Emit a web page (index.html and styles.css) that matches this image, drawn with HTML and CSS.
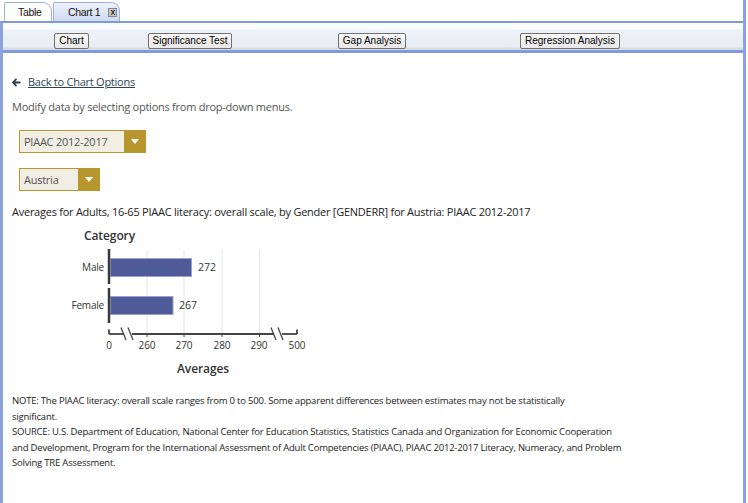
FILE: index.html
```html
<!DOCTYPE html>
<html>
<head>
<meta charset="utf-8">
<link rel="stylesheet" href="styles.css">
</head>
<body>
<div class="window">
  <div class="tabs">
    <div class="tab">Table</div>
    <div class="tab active"><span>Chart 1</span><span class="close">X</span></div>
  </div>
  <div class="panel">
    <div class="toolbar">
      <div class="cell"><button class="btn">Chart</button></div>
      <div class="cell"><button class="btn">Significance Test</button></div>
      <div class="cell"><button class="btn">Gap Analysis</button></div>
      <div class="cell"><button class="btn">Regression Analysis</button></div>
    </div>
    <div class="content">
      <div class="back">
        <svg class="arrow" width="9" height="9" viewBox="0 0 9 9"><path d="M4.5 0.8 L1 4.5 L4.5 8.2 M1.2 4.5 H8.5" fill="none" stroke="#2f3d45" stroke-width="1.8"/></svg>
        <a href="#" class="link">Back to Chart Options</a>
      </div>
      <p class="hint">Modify data by selecting options from drop-down menus.</p>
      <div class="select sel-year"><span class="sel-text">PIAAC 2012-2017</span><span class="sel-btn"><span class="caret"></span></span></div>
      <div class="select sel-country"><span class="sel-text">Austria</span><span class="sel-btn"><span class="caret"></span></span></div>
      <p class="title">Averages for Adults, 16-65 PIAAC literacy: overall scale, by Gender [GENDERR] for Austria: PIAAC 2012-2017</p>
      <svg class="chart" width="300" height="152" viewBox="12 226 300 152">
        <text x="84" y="241" class="ax-title">Category</text>
        <g stroke="#e4e4e4" stroke-width="1">
          <line x1="147" y1="251" x2="147" y2="335"/>
          <line x1="184" y1="251" x2="184" y2="335"/>
          <line x1="222" y1="251" x2="222" y2="335"/>
          <line x1="259.5" y1="251" x2="259.5" y2="335"/>
        </g>
        <rect x="110.5" y="259.5" width="81" height="18" fill="#4f5a98" stroke="#9aa1cc" stroke-width="1"/>
        <rect x="110.5" y="297.5" width="62.5" height="18" fill="#4f5a98" stroke="#9aa1cc" stroke-width="1"/>
        <g stroke="#3a3a3a" stroke-width="2.5">
          <line x1="109" y1="250" x2="109" y2="285"/>
          <line x1="109" y1="289" x2="109" y2="324"/>
        </g>
        <text x="104" y="272" class="lbl" text-anchor="end">Male</text>
        <text x="104" y="310" class="lbl" text-anchor="end">Female</text>
        <text x="198" y="272" class="val">272</text>
        <text x="179" y="310" class="val">267</text>
        <g stroke="#444" stroke-width="1.8" fill="none">
          <line x1="109" y1="335" x2="124" y2="335"/>
          <line x1="132" y1="335" x2="274" y2="335"/>
          <line x1="282" y1="335" x2="297" y2="335"/>
          <line x1="109" y1="330.5" x2="109" y2="335"/>
          <line x1="297" y1="330.5" x2="297" y2="335"/>
        </g>
        <g stroke="#444" stroke-width="1.3" fill="none">
          <line x1="121" y1="328.5" x2="126" y2="341"/>
          <line x1="128" y1="328.5" x2="133" y2="341"/>
          <line x1="271" y1="328.5" x2="276" y2="341"/>
          <line x1="278" y1="328.5" x2="283" y2="341"/>
        </g>
        <g stroke="#444" stroke-width="1">
          <line x1="147" y1="335" x2="147" y2="338"/>
          <line x1="184" y1="335" x2="184" y2="338"/>
          <line x1="222" y1="335" x2="222" y2="338"/>
          <line x1="259.5" y1="335" x2="259.5" y2="338"/>
        </g>
        <g class="tick" text-anchor="middle">
          <text x="109" y="350">0</text>
          <text x="147" y="350">260</text>
          <text x="184" y="350">270</text>
          <text x="222" y="350">280</text>
          <text x="259" y="350">290</text>
          <text x="297" y="350">500</text>
        </g>
        <text x="203" y="374" class="ax-title" text-anchor="middle">Averages</text>
      </svg>
      <div class="notes">
        <p>NOTE: The PIAAC literacy: overall scale ranges from 0 to 500. Some apparent differences between estimates may not be statistically<br>significant.</p>
        <p>SOURCE: U.S. Department of Education, National Center for Education Statistics, Statistics Canada and Organization for Economic Cooperation and Development, Program for the International Assessment of Adult Competencies (PIAAC), PIAAC 2012-2017 Literacy, Numeracy, and Problem Solving TRE Assessment.</p>
      </div>
    </div>
  </div>
</div>
</body>
</html>
```

FILE: styles.css
```css
* { box-sizing: border-box; }
html, body { margin: 0; padding: 0; background: #fff; }
body { width: 748px; height: 503px; overflow: hidden; font-family: "Open Sans", sans-serif; }

.window { width: 746px; height: 503px; display: flex; flex-direction: column; border-right: 3px solid #8aa3dd; }

.tabs { height: 21px; display: flex; align-items: flex-end; padding-left: 4px; gap: 1px; }
.tab {
  height: 19px; width: 48px; padding: 0 0 0 13px; display: flex; align-items: center;
  font-family: "Liberation Sans", sans-serif; font-size: 10.5px; letter-spacing: -0.3px; color: #111;
  white-space: nowrap;
  border: 1px solid #9db0d8; border-bottom: none; border-radius: 2px 9px 0 0;
  background: #fff;
}
.tab.active { background: linear-gradient(#eef2fb, #cfdaf2); width: 67px; padding-left: 14px; gap: 8px; }
.close {
  width: 9px; height: 9px; border: 1px solid #888; background: #c8c8c8; letter-spacing: 0;
  font-size: 7px; font-weight: bold; line-height: 7px; text-align: center; color: #222;
}

.panel { flex: 1; display: flex; flex-direction: column; border-left: 3px solid #8aa3dd; border-top: 2px solid #7f9bdb; }

.toolbar {
  height: 30px; display: grid; grid-template-columns: 137px 100px 264px 132px;
  align-items: end; padding-bottom: 1px;
  background: linear-gradient(#fbfcfe 0, #fbfcfe 6px, #eef2f8 7px, #e8edf4 24px, #d9dde4 25px);
  border-bottom: 3px solid #7f9bdb;
}
.cell { display: flex; justify-content: center; }
.btn {
  font-family: "Liberation Sans", sans-serif; font-size: 10px; color: #000;
  height: 16px; padding: 0 4px; line-height: 14px;
  border: 1px solid #707070; border-radius: 2px; background: linear-gradient(#fbfbfb, #e6e6e6);
}

.content { padding: 21px 0 0 9px; color: #333; }
.back { display: flex; align-items: center; gap: 7px; height: 16px; }
.arrow { display: block; }
.link { font-size: 11px; letter-spacing: -0.25px; color: #2c4552; text-decoration: underline; line-height: 16px; }
.hint { margin: 9px 0 0; font-size: 11px; letter-spacing: -0.25px; line-height: 16px; color: #555; }

.select { display: flex; height: 23px; margin-left: 7px; border: 1px solid #b8962e; }
.sel-year { width: 127px; margin-top: 15px; }
.sel-country { width: 81px; margin-top: 15px; }
.sel-text { flex: 1; background: #f1eee3; font-size: 11px; letter-spacing: -0.25px; color: #555; line-height: 21px; padding-left: 4px; }
.sel-btn { width: 21px; background: #b8962e; display: flex; align-items: center; justify-content: center; }
.caret { width: 0; height: 0; border-left: 4px solid transparent; border-right: 4px solid transparent; border-top: 5px solid #fff; }

.title { margin: 13px 0 0; font-size: 11px; letter-spacing: -0.25px; line-height: 16px; color: #222; }

.chart { display: block; margin-top: 5px; font-family: "Open Sans", sans-serif; }
.ax-title { font-size: 12px; font-weight: 600; fill: #333; letter-spacing: -0.1px; }
.lbl { font-size: 10px; letter-spacing: -0.2px; fill: #333; }
.val { font-size: 10.5px; fill: #333; }
.tick { font-size: 10px; fill: #333; }

.notes { margin-top: 16px; width: 612px; font-size: 9.5px; letter-spacing: -0.2px; line-height: 15.5px; color: #222; }
.notes p { margin: 0; }
```
